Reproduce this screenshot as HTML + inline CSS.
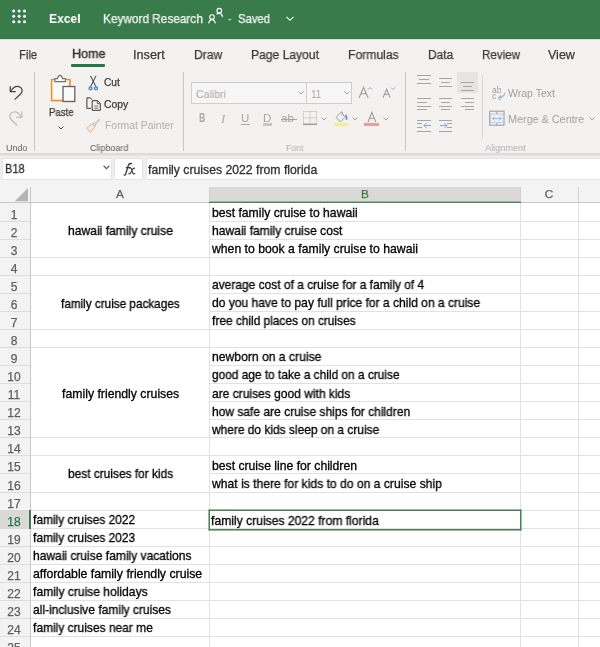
<!DOCTYPE html>
<html><head><meta charset="utf-8"><style>
html,body{margin:0;padding:0;width:600px;height:647px;overflow:hidden;background:#fff;}
body{position:relative;font-family:"Liberation Sans", sans-serif;}
.t{position:absolute;white-space:nowrap;will-change:transform;}
.c{-webkit-text-stroke:0.3px #000;}
.c2{-webkit-text-stroke:0.3px #323130;}
.s{-webkit-text-stroke:0.25px currentColor;}
.s4{-webkit-text-stroke:0.45px currentColor;}
.r{position:absolute;}
svg.r{overflow:visible;}
</style></head><body>
<div class="r" style="left:0px;top:0px;width:600px;height:38px;background:#3a7b4b;"></div>
<div class="r" style="left:0px;top:38px;width:600px;height:1px;background:#367548;"></div>
<div class="r" style="left:0px;top:39px;width:600px;height:1px;background:#d9e2da;"></div>
<svg class="r" style="left:0;top:0" width="40" height="38"><circle cx="13.7" cy="10.9" r="1.5" fill="#fff"/><circle cx="13.7" cy="16.2" r="1.5" fill="#fff"/><circle cx="13.7" cy="21.7" r="1.5" fill="#fff"/><circle cx="19.1" cy="10.9" r="1.5" fill="#fff"/><circle cx="19.1" cy="16.2" r="1.5" fill="#fff"/><circle cx="19.1" cy="21.7" r="1.5" fill="#fff"/><circle cx="24.5" cy="10.9" r="1.5" fill="#fff"/><circle cx="24.5" cy="16.2" r="1.5" fill="#fff"/><circle cx="24.5" cy="21.7" r="1.5" fill="#fff"/></svg>
<div class="t " style="left:49.10px;top:12.00px;font-size:13.7px;line-height:13.7px;color:#fff;font-weight:bold;transform:scaleX(0.8827);transform-origin:0 0;">Excel</div>
<div class="t s" style="left:102.80px;top:13.00px;font-size:12.2px;line-height:12.2px;color:#f4f7f5;transform:scaleX(0.9694);transform-origin:0 0;">Keyword Research</div>
<svg class="r" style="left:206px;top:6px" width="20" height="20" fill="none" stroke="#fff" stroke-width="1.1"><circle cx="6" cy="11" r="2.3"/><path d="M2.6 17.3 C3.2 15.2 4.5 13.6 6 13.4 C7.5 13.6 8.8 15.2 9.4 17.3"/><circle cx="13.3" cy="4.7" r="2.3"/><path d="M10.6 8.3 C11.4 7.5 12.3 7.1 13.3 7.1 C14.8 7.3 16.1 8.9 16.7 11"/></svg>
<div class="t " style="left:227.70px;top:13.00px;font-size:12.2px;line-height:12.2px;color:#fff;transform:scaleX(0.8148);transform-origin:0 0;">-</div>
<div class="t s" style="left:237.70px;top:13.00px;font-size:12.2px;line-height:12.2px;color:#f4f7f5;transform:scaleX(0.9249);transform-origin:0 0;">Saved</div>
<svg class="r" style="left:285px;top:15px" width="10" height="8" fill="none" stroke="#fff" stroke-width="1.1"><path d="M1.5 1.8 L5 5.3 L8.5 1.8"/></svg>
<div class="r" style="left:0px;top:40px;width:600px;height:113px;background:#f3f2f1;"></div>
<div class="t s" style="left:18.50px;top:49.00px;font-size:12.5px;line-height:12.5px;color:#3b3a39;transform:scaleX(0.8933);transform-origin:0 0;">File</div>
<div class="t s" style="left:133.30px;top:49.00px;font-size:12.5px;line-height:12.5px;color:#3b3a39;transform:scaleX(1.0144);transform-origin:0 0;">Insert</div>
<div class="t s" style="left:193.75px;top:49.00px;font-size:12.5px;line-height:12.5px;color:#3b3a39;transform:scaleX(0.9658);transform-origin:0 0;">Draw</div>
<div class="t s" style="left:250.80px;top:49.00px;font-size:12.5px;line-height:12.5px;color:#3b3a39;transform:scaleX(0.9679);transform-origin:0 0;">Page Layout</div>
<div class="t s" style="left:347.80px;top:49.00px;font-size:12.5px;line-height:12.5px;color:#3b3a39;transform:scaleX(0.9731);transform-origin:0 0;">Formulas</div>
<div class="t s" style="left:427.50px;top:49.00px;font-size:12.5px;line-height:12.5px;color:#3b3a39;transform:scaleX(0.9527);transform-origin:0 0;">Data</div>
<div class="t s" style="left:481.70px;top:49.00px;font-size:12.5px;line-height:12.5px;color:#3b3a39;transform:scaleX(0.9281);transform-origin:0 0;">Review</div>
<div class="t s" style="left:548.40px;top:49.00px;font-size:12.5px;line-height:12.5px;color:#3b3a39;transform:scaleX(0.9981);transform-origin:0 0;">View</div>
<div class="t s4" style="left:71.50px;top:48.00px;font-size:12.8px;line-height:12.8px;color:#3b3a39;transform:scaleX(0.9810);transform-origin:0 0;">Home</div>
<div class="r" style="left:71px;top:64px;width:34px;height:3px;background:#237a46;border-radius:1px;"></div>
<div class="r" style="left:34px;top:72px;width:1px;height:79px;background:#c8c6c4;"></div>
<div class="r" style="left:183px;top:72px;width:1px;height:79px;background:#c8c6c4;"></div>
<div class="r" style="left:405px;top:72px;width:1px;height:79px;background:#c8c6c4;"></div>
<div class="r" style="left:482px;top:75px;width:1px;height:63px;background:#d8d6d4;"></div>
<svg class="r" style="left:0px;top:80px" width="30" height="50" fill="none" stroke-width="1.25" stroke-linecap="butt" stroke-linejoin="miter"><path d="M10.3 6.2 V11.6 H15.8" stroke="#454545"/><path d="M10.8 11.2 C13 7.5 16 5.8 19 6.6 C22.6 7.8 23 11.5 20.8 13.8 L14.6 19.6" stroke="#454545"/><path d="M21.8 31.4 V37.3 H16.2" stroke="#bdbdbd"/><path d="M21.3 36.9 C19 33 16 31.5 13.2 32 C9.5 33 9 37 11 39.5 L17.3 45.5" stroke="#bdbdbd"/></svg>
<div class="t " style="left:5.70px;top:144.00px;font-size:9px;line-height:9px;color:#605e5c;transform:scaleX(0.9907);transform-origin:0 0;">Undo</div>
<svg class="r" style="left:46px;top:72px" width="34" height="34"><rect x="5.6" y="7.6" width="18.4" height="21" fill="#fbfaf8" stroke="#e8892b" stroke-width="1.5"/><rect x="7" y="9" width="15.6" height="18.2" fill="none" stroke="#f9e2b0" stroke-width="1"/><path d="M8.9 9.6 V6.6 H11.6 C11.9 4.3 12.8 3.4 14 3.4 C15.2 3.4 16.1 4.3 16.4 6.6 H19.4 V9.6 Z" fill="#fff" stroke="#707070" stroke-width="1.1"/><rect x="17" y="14.5" width="11.8" height="15" fill="#fafafa" stroke="#626262" stroke-width="1.3"/></svg>
<div class="t s" style="left:48.50px;top:108.00px;font-size:10.2px;line-height:10.2px;color:#3b3a39;transform:scaleX(0.9387);transform-origin:0 0;">Paste</div>
<svg class="r" style="left:57px;top:125px" width="8" height="6" fill="none" stroke="#444" stroke-width="1"><path d="M1.5 1.5 L4 4 L6.5 1.5"/></svg>
<svg class="r" style="left:84px;top:72px" width="20" height="20" fill="none" stroke-width="1"><path d="M6.5 3.8 L11.8 14.5 M12 3.8 L6.7 14.5" stroke="#3a3a3a"/><circle cx="6.5" cy="16.3" r="1.5" fill="#e8f0fa" stroke="#3b7fd0" stroke-width="1.3"/><circle cx="12" cy="16.3" r="1.5" fill="#e8f0fa" stroke="#3b7fd0" stroke-width="1.3"/></svg>
<div class="t s" style="left:104.20px;top:78.00px;font-size:10px;line-height:10px;color:#3b3a39;transform:scaleX(1.0161);transform-origin:0 0;">Cut</div>
<svg class="r" style="left:84px;top:95px" width="20" height="20" fill="none" stroke="#3a3a3a" stroke-width="1"><path d="M7.7 4.5 L6.5 2.9 H2.9 V13.3 H7"/><path d="M8.2 5.7 H13.5 L16.3 8.5 V15.3 H8.2 Z"/><path d="M13.3 5.9 V8.7 H16" stroke-width="0.8"/><path d="M10.3 11 H14.3 M10.3 13.2 H14.3" stroke-width="0.7"/></svg>
<div class="t s" style="left:104.00px;top:100.00px;font-size:10px;line-height:10px;color:#3b3a39;transform:scaleX(1.0407);transform-origin:0 0;">Copy</div>
<svg class="r" style="left:84px;top:116px" width="20" height="20" fill="none" stroke-width="1"><path d="M2.5 12 L8.5 7.5 L11 10.5 L6.5 16.5 Z" fill="#fbe7d6" stroke="#eab58c"/><path d="M8.8 8 L10.7 10.2 L12 9 L10 6.7 Z" fill="#eee" stroke="#b8b8b8" stroke-width="0.9"/><path d="M11 7.3 L14.8 3.3 C15.3 2.8 16 3.4 15.6 4 L12 8.2" stroke="#b8b8b8" stroke-width="0.9"/></svg>
<div class="t " style="left:104.50px;top:121.00px;font-size:10px;line-height:10px;color:#b3b0ad;transform:scaleX(1.0401);transform-origin:0 0;">Format Painter</div>
<div class="t " style="left:89.60px;top:143.00px;font-size:9.4px;line-height:9.4px;color:#605e5c;transform:scaleX(0.9540);transform-origin:0 0;">Clipboard</div>
<div class="r" style="left:191px;top:82px;width:160.5px;height:22px;background:#f6f6f6;box-sizing:border-box;border:1px solid #d0cecc;"></div>
<div class="r" style="left:306px;top:83px;width:1px;height:20px;background:#d0cecc;"></div>
<div class="t " style="left:195.60px;top:89.00px;font-size:10.9px;line-height:10.9px;color:#a8a6a4;transform:scaleX(0.9709);transform-origin:0 0;">Calibri</div>
<div class="t " style="left:311.00px;top:89.00px;font-size:10.9px;line-height:10.9px;color:#a8a6a4;transform:scaleX(0.9027);transform-origin:0 0;">11</div>
<svg class="r" style="left:296.5px;top:90px" width="8" height="6" fill="none" stroke="#a19f9d" stroke-width="1"><path d="M1.5 1.5 L4 4 L6.5 1.5"/></svg>
<svg class="r" style="left:342.5px;top:90px" width="8" height="6" fill="none" stroke="#a19f9d" stroke-width="1"><path d="M1.5 1.5 L4 4 L6.5 1.5"/></svg>
<svg class="r" style="left:358.3px;top:85.5px" width="11.2" height="13" fill="none" stroke="#9a9896" stroke-width="1.05"><path d="M1 12 L5.6 1.3 L10.2 12 M2.84 7.82 H8.36"/></svg>
<svg class="r" style="left:367px;top:86px" width="6" height="5" fill="none" stroke="#8ab0d8" stroke-width="1"><path d="M1 3.5 L3 1.5 L5 3.5"/></svg>
<svg class="r" style="left:381.8px;top:88px" width="9.2" height="10.6" fill="none" stroke="#9a9896" stroke-width="1.05"><path d="M1 9.6 L4.6 1.3 L8.2 9.6 M2.4400000000000004 6.332 H6.760000000000001"/></svg>
<svg class="r" style="left:389.5px;top:86px" width="6" height="5" fill="none" stroke="#8ab0d8" stroke-width="1"><path d="M1 1.5 L3 3.5 L5 1.5"/></svg>
<div class="t " style="left:198.80px;top:112.00px;font-size:12px;line-height:12px;color:#aaa8a6;font-weight:bold;transform:scaleX(0.7168);transform-origin:0 0;">B</div>
<div class="t " style="left:220.50px;top:112.00px;font-size:13px;line-height:13px;color:#b0aeac;font-family:'Liberation Serif',serif;"><i>I</i></div>
<div class="t " style="left:240.50px;top:113.00px;font-size:11.5px;line-height:11.5px;color:#a8a6a4;">U</div>
<div class="r" style="left:240.5px;top:123.5px;width:9px;height:1px;background:#a8a6a4;"></div>
<div class="t " style="left:262.50px;top:113.00px;font-size:11.5px;line-height:11.5px;color:#a8a6a4;">D</div>
<div class="r" style="left:262.5px;top:122.6px;width:9px;height:3px;background:#c8c6c4;"></div>
<div class="t " style="left:281.00px;top:113.00px;font-size:11.5px;line-height:11.5px;color:#a8a6a4;">ab</div>
<div class="r" style="left:280.5px;top:119.3px;width:16px;height:1px;background:#a8a6a4;"></div>
<svg class="r" style="left:302px;top:110px" width="16" height="17" fill="none" stroke="#b4b2b0" stroke-width="1"><path d="M1.5 1.5 H14.5 M1.5 7.8 H14.5 M1.5 1.5 V14 M8 1.5 V14 M14.5 1.5 V14" stroke-dasharray="1 1"/><path d="M1 14.3 H15" stroke="#a19f9d" stroke-width="1.6"/></svg>
<svg class="r" style="left:320px;top:116px" width="8" height="6" fill="none" stroke="#a19f9d" stroke-width="1"><path d="M1.5 1.5 L4 4 L6.5 1.5"/></svg>
<svg class="r" style="left:333px;top:109px" width="16" height="16" fill="none" stroke="#a19f9d" stroke-width="1"><path d="M8.4 2.7 L3.2 8.4 L7.4 13 L11.8 8.4 Z"/><path d="M8.4 2.7 C9.3 3.8 9.5 5.3 9 6.5" /><path d="M12.3 5.8 C13.6 6.8 14 8.8 13.3 10.8" stroke="#5a8fd0" stroke-width="1.6"/></svg>
<div class="r" style="left:334px;top:122.8px;width:14px;height:3.2px;background:#f3ef8f;"></div>
<svg class="r" style="left:351px;top:116px" width="8" height="6" fill="none" stroke="#a19f9d" stroke-width="1"><path d="M1.5 1.5 L4 4 L6.5 1.5"/></svg>
<svg class="r" style="left:367px;top:110.5px" width="9.8" height="12" fill="none" stroke="#9a9896" stroke-width="1.05"><path d="M1 11 L4.9 1.3 L8.8 11 M2.56 7.2 H7.24"/></svg>
<div class="r" style="left:364px;top:122.6px;width:15px;height:3.4px;background:#ee9a96;"></div>
<svg class="r" style="left:382px;top:116px" width="8" height="6" fill="none" stroke="#a19f9d" stroke-width="1"><path d="M1.5 1.5 L4 4 L6.5 1.5"/></svg>
<div class="t " style="left:285.60px;top:143.00px;font-size:9.4px;line-height:9.4px;color:#b3b0ad;transform:scaleX(0.9255);transform-origin:0 0;">Font</div>
<div class="r" style="left:456.5px;top:72px;width:21px;height:21px;background:#e7e5e3;"></div>
<div class="r" style="left:417px;top:75px;width:13.5px;height:1px;background:#a8a6a4;"></div>
<div class="r" style="left:419px;top:79px;width:10px;height:1px;background:#a8a6a4;"></div>
<div class="r" style="left:417px;top:83px;width:13.5px;height:1px;background:#a8a6a4;"></div>
<div class="r" style="left:439px;top:78px;width:13px;height:1px;background:#a8a6a4;"></div>
<div class="r" style="left:441px;top:82px;width:9px;height:1px;background:#a8a6a4;"></div>
<div class="r" style="left:439px;top:86px;width:13px;height:1px;background:#a8a6a4;"></div>
<div class="r" style="left:461px;top:81.5px;width:13px;height:1px;background:#a8a6a4;"></div>
<div class="r" style="left:463px;top:85.5px;width:9px;height:1px;background:#a8a6a4;"></div>
<div class="r" style="left:461px;top:89.5px;width:13px;height:1px;background:#a8a6a4;"></div>
<div class="r" style="left:417px;top:98px;width:13.5px;height:1px;background:#a8a6a4;"></div>
<div class="r" style="left:417px;top:102px;width:10px;height:1px;background:#a8a6a4;"></div>
<div class="r" style="left:417px;top:105.5px;width:13.5px;height:1px;background:#a8a6a4;"></div>
<div class="r" style="left:417px;top:109px;width:10px;height:1px;background:#a8a6a4;"></div>
<div class="r" style="left:439px;top:98px;width:13px;height:1px;background:#a8a6a4;"></div>
<div class="r" style="left:441px;top:102px;width:9px;height:1px;background:#a8a6a4;"></div>
<div class="r" style="left:439px;top:105.5px;width:13px;height:1px;background:#a8a6a4;"></div>
<div class="r" style="left:441px;top:109px;width:9px;height:1px;background:#a8a6a4;"></div>
<div class="r" style="left:461px;top:98px;width:13px;height:1px;background:#a8a6a4;"></div>
<div class="r" style="left:465px;top:102px;width:9px;height:1px;background:#a8a6a4;"></div>
<div class="r" style="left:461px;top:105.5px;width:13px;height:1px;background:#a8a6a4;"></div>
<div class="r" style="left:465px;top:109px;width:9px;height:1px;background:#a8a6a4;"></div>
<div class="r" style="left:417px;top:119.5px;width:13.5px;height:1px;background:#a8a6a4;"></div>
<div class="r" style="left:417px;top:123px;width:5px;height:1px;background:#a8a6a4;"></div>
<div class="r" style="left:417px;top:127px;width:5px;height:1px;background:#a8a6a4;"></div>
<div class="r" style="left:417px;top:131px;width:13.5px;height:1px;background:#a8a6a4;"></div>
<div class="r" style="left:439px;top:119.5px;width:13px;height:1px;background:#a8a6a4;"></div>
<div class="r" style="left:447px;top:123px;width:5px;height:1px;background:#a8a6a4;"></div>
<div class="r" style="left:447px;top:127px;width:5px;height:1px;background:#a8a6a4;"></div>
<div class="r" style="left:439px;top:131px;width:13px;height:1px;background:#a8a6a4;"></div>
<svg class="r" style="left:423px;top:121px" width="10" height="9" fill="none" stroke="#7ea9d8" stroke-width="1"><path d="M1 4.5 H8 M3.5 2 L1 4.5 L3.5 7"/></svg>
<svg class="r" style="left:439px;top:121px" width="10" height="9" fill="none" stroke="#7ea9d8" stroke-width="1"><path d="M1 4.5 H8 M5.5 2 L8 4.5 L5.5 7"/></svg>
<div class="t " style="left:492.00px;top:86.00px;font-size:8.5px;line-height:8.5px;color:#a19f9d;">ab</div>
<div class="t " style="left:492.00px;top:92.00px;font-size:8.5px;line-height:8.5px;color:#a19f9d;">c</div>
<svg class="r" style="left:496px;top:91px" width="11" height="11" fill="none" stroke="#8fb6e2" stroke-width="1.1"><path d="M8.9 1.6 C8.6 4.2 6.6 6.2 2.8 6.8 M5.1 4.5 L2.6 6.9 L4.8 9"/></svg>
<div class="t " style="left:508.00px;top:89.00px;font-size:10.4px;line-height:10.4px;color:#a19f9d;transform:scaleX(1.0118);transform-origin:0 0;">Wrap Text</div>
<svg class="r" style="left:489px;top:110px" width="17" height="17" fill="none"><rect x="0.7" y="1.2" width="14.3" height="14" stroke="#a19f9d" stroke-width="1.1"/><rect x="1.6" y="4.1" width="12.5" height="8.6" stroke="#b3cfee" stroke-width="1"/><path d="M3.6 8.6 H12.1 M5.6 6.6 L3.6 8.6 L5.6 10.6 M10.1 6.6 L12.1 8.6 L10.1 10.6" stroke="#8fb6e2" stroke-width="1"/><path d="M7.85 1.2 V4 M7.85 12.8 V15.2" stroke="#a19f9d" stroke-width="1"/></svg>
<div class="t " style="left:508.40px;top:114.00px;font-size:11px;line-height:11px;color:#a19f9d;transform:scaleX(0.9813);transform-origin:0 0;">Merge &amp; Centre</div>
<svg class="r" style="left:588px;top:116px" width="8" height="6" fill="none" stroke="#a19f9d" stroke-width="1"><path d="M1.5 1.5 L4 4 L6.5 1.5"/></svg>
<div class="t " style="left:485.00px;top:143.00px;font-size:9.6px;line-height:9.6px;color:#b3b0ad;transform:scaleX(0.9508);transform-origin:0 0;">Alignment</div>
<div class="r" style="left:0px;top:153px;width:600px;height:2px;background:#dddcdb;"></div>
<div class="r" style="left:0px;top:155px;width:600px;height:1px;background:#e6e6e6;"></div>
<div class="r" style="left:0px;top:156px;width:600px;height:47px;background:#eeeeee;"></div>
<div class="r" style="left:0px;top:180px;width:600px;height:23px;background:#f3f3f3;"></div>
<div class="r" style="left:2px;top:157.5px;width:110px;height:22px;background:#fff;box-sizing:border-box;border:1px solid #e4e4e4;border-radius:2px;"></div>
<div class="t c2" style="left:5.00px;top:163.00px;font-size:12.2px;line-height:12.2px;color:#323130;transform:scaleX(0.8986);transform-origin:0 0;">B18</div>
<svg class="r" style="left:102px;top:164px" width="9" height="7" fill="none" stroke="#605e5c" stroke-width="1.2"><path d="M1.6 1.8 L4.5 4.6 L7.4 1.8"/></svg>
<div class="r" style="left:114px;top:157.5px;width:28.5px;height:22px;background:#fff;box-sizing:border-box;border:1px solid #e4e4e4;border-radius:2px;"></div>
<svg class="r" style="left:120px;top:160px" width="18" height="18" fill="none" stroke="#3a3a3a" stroke-linecap="round"><path d="M4 15 C5 15.3 5.6 14.6 6 13 L8.3 5.5 C8.8 3.8 9.8 3.2 11.6 3.6" stroke-width="1.3"/><path d="M6.3 7.6 H10" stroke-width="1.1"/><path d="M9.6 8 C10.8 7.5 11.2 8.3 11.6 9.6 L12.5 12.4 C12.9 13.7 13.4 14.3 14.8 13.6 M14.6 8.2 C13.6 7.8 13 8.6 12.2 10 L11 12.2 C10.3 13.5 9.8 14.2 8.8 13.6" stroke-width="1.15"/></svg>
<div class="r" style="left:145.5px;top:157.5px;width:460px;height:22px;background:#fff;box-sizing:border-box;border:1px solid #e4e4e4;border-radius:2px;"></div>
<div class="t c2" style="left:148.30px;top:164.00px;font-size:12.2px;line-height:12.2px;color:#323130;transform:scaleX(1.0033);transform-origin:0 0;">family cruises 2022 from florida</div>
<div class="r" style="left:30px;top:203px;width:570px;height:444px;background:#fff;"></div>
<div class="r" style="left:0px;top:203px;width:30px;height:444px;background:#f3f3f3;"></div>
<div class="r" style="left:209px;top:187px;width:312px;height:15px;background:#dad9d8;"></div>
<svg class="r" style="left:14px;top:187px" width="16" height="16"><path d="M14 1 V14.3 H0.8 Z" fill="#b4b4b4"/></svg>
<div class="t s" style="left:-79.70px;width:400px;text-align:center;top:189.00px;font-size:11.8px;line-height:11.8px;color:#605e5c;">A</div>
<div class="t s" style="left:165.00px;width:400px;text-align:center;top:189.00px;font-size:11.8px;line-height:11.8px;color:#3a7b4b;">B</div>
<div class="t s" style="left:349.30px;width:400px;text-align:center;top:189.00px;font-size:11.8px;line-height:11.8px;color:#605e5c;">C</div>
<div class="r" style="left:209px;top:187px;width:1px;height:16px;background:#d0d0d0;"></div>
<div class="r" style="left:520px;top:187px;width:1px;height:16px;background:#d0d0d0;"></div>
<div class="r" style="left:578px;top:187px;width:1px;height:16px;background:#d0d0d0;"></div>
<div class="r" style="left:0px;top:202px;width:600px;height:1px;background:#c8c8c8;"></div>
<div class="r" style="left:209px;top:201px;width:312px;height:1px;background:#98b8a0;"></div>
<div class="r" style="left:209px;top:202px;width:312px;height:1px;background:#4a8158;"></div>
<div class="r" style="left:30px;top:187px;width:1px;height:460px;background:#c8c8c8;"></div>
<div class="r" style="left:0px;top:221px;width:30px;height:1px;background:#dcdcdc;"></div>
<div class="r" style="left:209px;top:221px;width:391px;height:1px;background:#e1e1e1;"></div>
<div class="t s" style="left:-186.20px;width:400px;text-align:center;top:209.00px;font-size:12px;line-height:12px;color:#605e5c;">1</div>
<div class="r" style="left:0px;top:239px;width:30px;height:1px;background:#dcdcdc;"></div>
<div class="r" style="left:209px;top:239px;width:391px;height:1px;background:#e1e1e1;"></div>
<div class="t s" style="left:-186.20px;width:400px;text-align:center;top:227.00px;font-size:12px;line-height:12px;color:#605e5c;">2</div>
<div class="r" style="left:0px;top:257px;width:30px;height:1px;background:#dcdcdc;"></div>
<div class="r" style="left:31px;top:257px;width:569px;height:1px;background:#e1e1e1;"></div>
<div class="t s" style="left:-186.20px;width:400px;text-align:center;top:245.00px;font-size:12px;line-height:12px;color:#605e5c;">3</div>
<div class="r" style="left:0px;top:275px;width:30px;height:1px;background:#dcdcdc;"></div>
<div class="r" style="left:31px;top:275px;width:569px;height:1px;background:#e1e1e1;"></div>
<div class="t s" style="left:-186.20px;width:400px;text-align:center;top:263.00px;font-size:12px;line-height:12px;color:#605e5c;">4</div>
<div class="r" style="left:0px;top:293px;width:30px;height:1px;background:#dcdcdc;"></div>
<div class="r" style="left:209px;top:293px;width:391px;height:1px;background:#e1e1e1;"></div>
<div class="t s" style="left:-186.20px;width:400px;text-align:center;top:281.00px;font-size:12px;line-height:12px;color:#605e5c;">5</div>
<div class="r" style="left:0px;top:311px;width:30px;height:1px;background:#dcdcdc;"></div>
<div class="r" style="left:209px;top:311px;width:391px;height:1px;background:#e1e1e1;"></div>
<div class="t s" style="left:-186.20px;width:400px;text-align:center;top:299.00px;font-size:12px;line-height:12px;color:#605e5c;">6</div>
<div class="r" style="left:0px;top:329px;width:30px;height:1px;background:#dcdcdc;"></div>
<div class="r" style="left:31px;top:329px;width:569px;height:1px;background:#e1e1e1;"></div>
<div class="t s" style="left:-186.20px;width:400px;text-align:center;top:317.00px;font-size:12px;line-height:12px;color:#605e5c;">7</div>
<div class="r" style="left:0px;top:347px;width:30px;height:1px;background:#dcdcdc;"></div>
<div class="r" style="left:31px;top:347px;width:569px;height:1px;background:#e1e1e1;"></div>
<div class="t s" style="left:-186.20px;width:400px;text-align:center;top:335.00px;font-size:12px;line-height:12px;color:#605e5c;">8</div>
<div class="r" style="left:0px;top:365px;width:30px;height:1px;background:#dcdcdc;"></div>
<div class="r" style="left:209px;top:365px;width:391px;height:1px;background:#e1e1e1;"></div>
<div class="t s" style="left:-186.20px;width:400px;text-align:center;top:353.00px;font-size:12px;line-height:12px;color:#605e5c;">9</div>
<div class="r" style="left:0px;top:383px;width:30px;height:1px;background:#dcdcdc;"></div>
<div class="r" style="left:209px;top:383px;width:391px;height:1px;background:#e1e1e1;"></div>
<div class="t s" style="left:-186.20px;width:400px;text-align:center;top:371.00px;font-size:12px;line-height:12px;color:#605e5c;">10</div>
<div class="r" style="left:0px;top:401px;width:30px;height:1px;background:#dcdcdc;"></div>
<div class="r" style="left:209px;top:401px;width:391px;height:1px;background:#e1e1e1;"></div>
<div class="t s" style="left:-186.20px;width:400px;text-align:center;top:389.00px;font-size:12px;line-height:12px;color:#605e5c;">11</div>
<div class="r" style="left:0px;top:419px;width:30px;height:1px;background:#dcdcdc;"></div>
<div class="r" style="left:209px;top:419px;width:391px;height:1px;background:#e1e1e1;"></div>
<div class="t s" style="left:-186.20px;width:400px;text-align:center;top:407.00px;font-size:12px;line-height:12px;color:#605e5c;">12</div>
<div class="r" style="left:0px;top:437px;width:30px;height:1px;background:#dcdcdc;"></div>
<div class="r" style="left:31px;top:437px;width:569px;height:1px;background:#e1e1e1;"></div>
<div class="t s" style="left:-186.20px;width:400px;text-align:center;top:425.00px;font-size:12px;line-height:12px;color:#605e5c;">13</div>
<div class="r" style="left:0px;top:455px;width:30px;height:1px;background:#dcdcdc;"></div>
<div class="r" style="left:31px;top:455px;width:569px;height:1px;background:#e1e1e1;"></div>
<div class="t s" style="left:-186.20px;width:400px;text-align:center;top:443.00px;font-size:12px;line-height:12px;color:#605e5c;">14</div>
<div class="r" style="left:0px;top:473px;width:30px;height:1px;background:#dcdcdc;"></div>
<div class="r" style="left:209px;top:473px;width:391px;height:1px;background:#e1e1e1;"></div>
<div class="t s" style="left:-186.20px;width:400px;text-align:center;top:461.00px;font-size:12px;line-height:12px;color:#605e5c;">15</div>
<div class="r" style="left:0px;top:492px;width:30px;height:1px;background:#dcdcdc;"></div>
<div class="r" style="left:31px;top:492px;width:569px;height:1px;background:#e1e1e1;"></div>
<div class="t s" style="left:-186.20px;width:400px;text-align:center;top:480.00px;font-size:12px;line-height:12px;color:#605e5c;">16</div>
<div class="r" style="left:0px;top:510px;width:30px;height:1px;background:#dcdcdc;"></div>
<div class="r" style="left:31px;top:510px;width:569px;height:1px;background:#e1e1e1;"></div>
<div class="t s" style="left:-186.20px;width:400px;text-align:center;top:498.00px;font-size:12px;line-height:12px;color:#605e5c;">17</div>
<div class="r" style="left:0px;top:528px;width:30px;height:1px;background:#dcdcdc;"></div>
<div class="r" style="left:31px;top:528px;width:569px;height:1px;background:#e1e1e1;"></div>
<div class="t s" style="left:-186.20px;width:400px;text-align:center;top:516.00px;font-size:12px;line-height:12px;color:#605e5c;">18</div>
<div class="r" style="left:0px;top:546px;width:30px;height:1px;background:#dcdcdc;"></div>
<div class="r" style="left:31px;top:546px;width:569px;height:1px;background:#e1e1e1;"></div>
<div class="t s" style="left:-186.20px;width:400px;text-align:center;top:534.00px;font-size:12px;line-height:12px;color:#605e5c;">19</div>
<div class="r" style="left:0px;top:564px;width:30px;height:1px;background:#dcdcdc;"></div>
<div class="r" style="left:31px;top:564px;width:569px;height:1px;background:#e1e1e1;"></div>
<div class="t s" style="left:-186.20px;width:400px;text-align:center;top:552.00px;font-size:12px;line-height:12px;color:#605e5c;">20</div>
<div class="r" style="left:0px;top:582px;width:30px;height:1px;background:#dcdcdc;"></div>
<div class="r" style="left:31px;top:582px;width:569px;height:1px;background:#e1e1e1;"></div>
<div class="t s" style="left:-186.20px;width:400px;text-align:center;top:570.00px;font-size:12px;line-height:12px;color:#605e5c;">21</div>
<div class="r" style="left:0px;top:600px;width:30px;height:1px;background:#dcdcdc;"></div>
<div class="r" style="left:31px;top:600px;width:569px;height:1px;background:#e1e1e1;"></div>
<div class="t s" style="left:-186.20px;width:400px;text-align:center;top:588.00px;font-size:12px;line-height:12px;color:#605e5c;">22</div>
<div class="r" style="left:0px;top:618px;width:30px;height:1px;background:#dcdcdc;"></div>
<div class="r" style="left:31px;top:618px;width:569px;height:1px;background:#e1e1e1;"></div>
<div class="t s" style="left:-186.20px;width:400px;text-align:center;top:606.00px;font-size:12px;line-height:12px;color:#605e5c;">23</div>
<div class="r" style="left:0px;top:636px;width:30px;height:1px;background:#dcdcdc;"></div>
<div class="r" style="left:31px;top:636px;width:569px;height:1px;background:#e1e1e1;"></div>
<div class="t s" style="left:-186.20px;width:400px;text-align:center;top:624.00px;font-size:12px;line-height:12px;color:#605e5c;">24</div>
<div class="t s" style="left:-186.20px;width:400px;text-align:center;top:642.00px;font-size:12px;line-height:12px;color:#605e5c;">25</div>
<div class="r" style="left:209px;top:203px;width:1px;height:444px;background:#e1e1e1;"></div>
<div class="r" style="left:520px;top:203px;width:1px;height:444px;background:#e1e1e1;"></div>
<div class="r" style="left:578px;top:203px;width:1px;height:444px;background:#e1e1e1;"></div>
<div class="t c" style="left:211.60px;top:207.00px;font-size:12.2px;line-height:12.2px;color:#000;transform:scaleX(0.9993);transform-origin:0 0;">best family cruise to hawaii</div>
<div class="t c" style="left:211.60px;top:225.00px;font-size:12.2px;line-height:12.2px;color:#000;transform:scaleX(0.9913);transform-origin:0 0;">hawaii family cruise cost</div>
<div class="t c" style="left:211.65px;top:243.00px;font-size:12.2px;line-height:12.2px;color:#000;transform:scaleX(1.0029);transform-origin:0 0;">when to book a family cruise to hawaii</div>
<div class="t c" style="left:211.60px;top:279.00px;font-size:12.2px;line-height:12.2px;color:#000;transform:scaleX(0.9820);transform-origin:0 0;">average cost of a cruise for a family of 4</div>
<div class="t c" style="left:211.60px;top:297.00px;font-size:12.2px;line-height:12.2px;color:#000;transform:scaleX(0.9895);transform-origin:0 0;">do you have to pay full price for a child on a cruise</div>
<div class="t c" style="left:211.60px;top:315.00px;font-size:12.2px;line-height:12.2px;color:#000;transform:scaleX(0.9766);transform-origin:0 0;">free child places on cruises</div>
<div class="t c" style="left:211.60px;top:351.00px;font-size:12.2px;line-height:12.2px;color:#000;transform:scaleX(0.9959);transform-origin:0 0;">newborn on a cruise</div>
<div class="t c" style="left:211.60px;top:369.00px;font-size:12.2px;line-height:12.2px;color:#000;transform:scaleX(0.9746);transform-origin:0 0;">good age to take a child on a cruise</div>
<div class="t c" style="left:211.60px;top:388.00px;font-size:12.2px;line-height:12.2px;color:#000;transform:scaleX(0.9861);transform-origin:0 0;">are cruises good with kids</div>
<div class="t c" style="left:211.60px;top:406.00px;font-size:12.2px;line-height:12.2px;color:#000;transform:scaleX(0.9851);transform-origin:0 0;">how safe are cruise ships for children</div>
<div class="t c" style="left:211.65px;top:424.00px;font-size:12.2px;line-height:12.2px;color:#000;transform:scaleX(0.9792);transform-origin:0 0;">where do kids sleep on a cruise</div>
<div class="t c" style="left:211.60px;top:460.00px;font-size:12.2px;line-height:12.2px;color:#000;transform:scaleX(1.0000);transform-origin:0 0;">best cruise line for children</div>
<div class="t c" style="left:211.65px;top:478.00px;font-size:12.2px;line-height:12.2px;color:#000;transform:scaleX(0.9948);transform-origin:0 0;">what is there for kids to do on a cruise ship</div>
<div class="t c" style="left:211.00px;top:515.00px;font-size:12.2px;line-height:12.2px;color:#000;transform:scaleX(0.9950);transform-origin:0 0;">family cruises 2022 from florida</div>
<div class="t c" style="left:32.90px;top:514.00px;font-size:12.2px;line-height:12.2px;color:#000;transform:scaleX(0.9789);transform-origin:0 0;">family cruises 2022</div>
<div class="t c" style="left:32.90px;top:532.00px;font-size:12.2px;line-height:12.2px;color:#000;transform:scaleX(0.9789);transform-origin:0 0;">family cruises 2023</div>
<div class="t c" style="left:32.90px;top:550.00px;font-size:12.2px;line-height:12.2px;color:#000;transform:scaleX(0.9863);transform-origin:0 0;">hawaii cruise family vacations</div>
<div class="t c" style="left:32.90px;top:568.00px;font-size:12.2px;line-height:12.2px;color:#000;transform:scaleX(1.0086);transform-origin:0 0;">affordable family friendly cruise</div>
<div class="t c" style="left:32.90px;top:586.00px;font-size:12.2px;line-height:12.2px;color:#000;transform:scaleX(0.9892);transform-origin:0 0;">family cruise holidays</div>
<div class="t c" style="left:32.90px;top:604.00px;font-size:12.2px;line-height:12.2px;color:#000;transform:scaleX(0.9840);transform-origin:0 0;">all-inclusive family cruises</div>
<div class="t c" style="left:32.90px;top:622.00px;font-size:12.2px;line-height:12.2px;color:#000;transform:scaleX(0.9824);transform-origin:0 0;">family cruises near me</div>
<div class="t c" style="left:68.10px;top:225.00px;font-size:12.2px;line-height:12.2px;color:#000;transform:scaleX(0.9929);transform-origin:0 0;">hawaii family cruise</div>
<div class="t c" style="left:61.30px;top:298.00px;font-size:12.2px;line-height:12.2px;color:#000;transform:scaleX(0.9619);transform-origin:0 0;">family cruise packages</div>
<div class="t c" style="left:61.90px;top:388.00px;font-size:12.2px;line-height:12.2px;color:#000;transform:scaleX(1.0060);transform-origin:0 0;">family friendly cruises</div>
<div class="t c" style="left:68.00px;top:468.00px;font-size:12.2px;line-height:12.2px;color:#000;transform:scaleX(0.9768);transform-origin:0 0;">best cruises for kids</div>
<div class="r" style="left:208px;top:509px;width:314px;height:22px;background:transparent;box-sizing:border-box;border:1px solid rgba(74,129,88,0.55);"></div>
<div class="r" style="left:209px;top:510px;width:312px;height:20px;background:transparent;box-sizing:border-box;border:1px solid #4a8158;"></div>
<div class="r" style="left:0px;top:510px;width:30px;height:19px;background:#dad9d8;"></div>
<div class="r" style="left:29px;top:510px;width:2px;height:19px;background:#3f7a52;"></div>
<div class="t s" style="left:-186.20px;width:400px;text-align:center;top:516.00px;font-size:12px;line-height:12px;color:#217346;">18</div>
</body></html>
